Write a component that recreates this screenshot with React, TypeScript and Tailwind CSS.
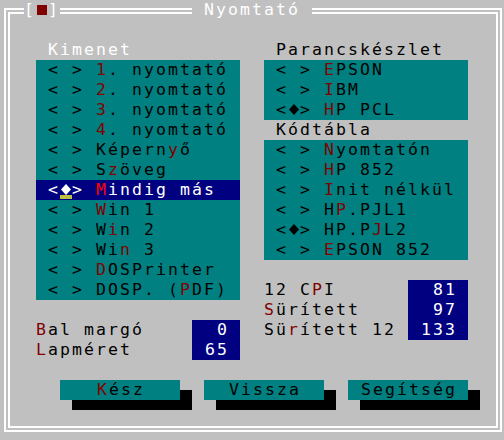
import React from "react";

type Item = { text: string; hot: number; on?: boolean; focus?: boolean };

const kimenet: Item[] = [
  { text: "1. nyomtató", hot: 0 },
  { text: "2. nyomtató", hot: 0 },
  { text: "3. nyomtató", hot: 0 },
  { text: "4. nyomtató", hot: 0 },
  { text: "Képernyő", hot: 6 },
  { text: "Szöveg", hot: 1 },
  { text: "Mindig más", hot: 0, on: true, focus: true },
  { text: "Win 1", hot: 0 },
  { text: "Win 2", hot: 1 },
  { text: "Win 3", hot: 2 },
  { text: "DOSPrinter", hot: 0 },
  { text: "DOSP. (PDF)", hot: 7 },
];

const parancs: Item[] = [
  { text: "EPSON", hot: 0 },
  { text: "IBM", hot: 0 },
  { text: "HP PCL", hot: 0, on: true },
];

const kodtabla: Item[] = [
  { text: "Nyomtatón", hot: 0 },
  { text: "HP 852", hot: 0 },
  { text: "Init nélkül", hot: 0 },
  { text: "HP.PJL1", hot: 1 },
  { text: "HP.PJL2", hot: 4, on: true },
  { text: "EPSON 852", hot: 0 },
];

const Hot = ({
  text,
  hot,
  color = "text-[#800000]",
}: {
  text: string;
  hot: number;
  color?: string;
}) =>
  hot < 0 ? (
    <>{text}</>
  ) : (
    <>
      {text.slice(0, hot)}
      <span className={color}>{text[hot]}</span>
      {text.slice(hot + 1)}
    </>
  );

const Mark = ({ on, focus }: { on?: boolean; focus?: boolean }) => (
  <svg width="12" height="20" viewBox="0 0 12 20" className="shrink-0">
    {on && (
      <polygon points="6,4 11,9.5 6,15 1,9.5" fill={focus ? "#ffffff" : "#000000"} />
    )}
    {focus && <rect x="0" y="15" width="12" height="4" fill="#c0c040" />}
  </svg>
);

const Radio = ({ item }: { item: Item }) => (
  <div
    className={`flex h-[20px] whitespace-pre pl-[12px] ${
      item.focus ? "bg-[#000080] text-white" : "text-black"
    }`}
  >
    <span>{"<"}</span>
    <Mark on={item.on} focus={item.focus} />
    <span>{"> "}</span>
    <span>
      <Hot
        text={item.text}
        hot={item.hot}
        color={item.focus ? "text-[#ff0000]" : "text-[#800000]"}
      />
    </span>
  </div>
);

const Button = ({ label, hot, place }: { label: string; hot: number; place: string }) => (
  <div
    className={`${place} row-start-20 col-span-10 bg-[#008080] text-center text-black whitespace-pre pl-[2px] shadow-[12px_10px_0_#000]`}
  >
    <Hot text={label} hot={hot} />
  </div>
);

export default function App() {
  return (
    <div className="grid h-[440px] w-[504px] grid-cols-[repeat(42,12px)] grid-rows-[repeat(22,20px)] overflow-hidden bg-[#c0c0c0] font-['DejaVu_Sans_Mono',monospace] text-[16.5px] leading-[20px] tracking-[2.066px]">
      {/* window frame */}
      <div className="col-start-1 col-span-42 row-start-1 row-span-22 mb-[8px] ml-[4px] mr-[2px] mt-[8px] border-[6px] border-double border-white" />

      {/* close box */}
      <div className="col-start-3 col-span-3 row-start-1 flex bg-[#c0c0c0] text-white whitespace-pre">
        <span>[</span>
        <span className="flex w-[12px] items-center justify-center">
          <span className="h-[10px] w-[10px] bg-[#800000]" />
        </span>
        <span>]</span>
      </div>

      {/* title */}
      <div className="col-start-17 col-span-10 row-start-1 bg-[#c0c0c0] text-white whitespace-pre">
        {" Nyomtató "}
      </div>

      {/* Kimenet */}
      <div className="col-start-5 col-span-10 row-start-3 text-white">Kimenet</div>
      <div className="col-start-4 col-span-17 row-start-4 row-span-12 flex flex-col bg-[#008080]">
        {kimenet.map((it) => (
          <Radio key={it.text} item={it} />
        ))}
      </div>

      {/* Parancskészlet */}
      <div className="col-start-24 col-span-15 row-start-3 text-black">Parancskészlet</div>
      <div className="col-start-23 col-span-17 row-start-4 row-span-3 flex flex-col bg-[#008080]">
        {parancs.map((it) => (
          <Radio key={it.text} item={it} />
        ))}
      </div>

      {/* Kódtábla */}
      <div className="col-start-24 col-span-15 row-start-7 text-black">Kódtábla</div>
      <div className="col-start-23 col-span-17 row-start-8 row-span-6 flex flex-col bg-[#008080]">
        {kodtabla.map((it) => (
          <Radio key={it.text} item={it} />
        ))}
      </div>

      {/* CPI */}
      <div className="col-start-23 col-span-12 row-start-15 row-span-3 flex flex-col whitespace-pre text-black">
        <div>
          <Hot text="12 CPI" hot={4} />
        </div>
        <div>
          <Hot text="Sürített" hot={0} />
        </div>
        <div>
          <Hot text="Sürített 12" hot={2} />
        </div>
      </div>
      <div className="col-start-35 col-span-5 row-start-15 row-span-3 flex flex-col items-end bg-[#000080] pr-[11px] text-white">
        <div>81</div>
        <div>97</div>
        <div>133</div>
      </div>

      {/* margins */}
      <div className="col-start-4 col-span-12 row-start-17 row-span-2 flex flex-col whitespace-pre text-black">
        <div>
          <Hot text="Bal margó" hot={0} />
        </div>
        <div>
          <Hot text="Lapméret" hot={0} />
        </div>
      </div>
      <div className="col-start-17 col-span-4 row-start-17 row-span-2 flex flex-col items-end bg-[#000080] pr-[11px] text-white">
        <div>0</div>
        <div>65</div>
      </div>

      {/* buttons */}
      <Button label="Kész" hot={0} place="col-start-6" />
      <Button label="Vissza" hot={-1} place="col-start-18" />
      <Button label="Segítség" hot={-1} place="col-start-30" />
    </div>
  );
}
